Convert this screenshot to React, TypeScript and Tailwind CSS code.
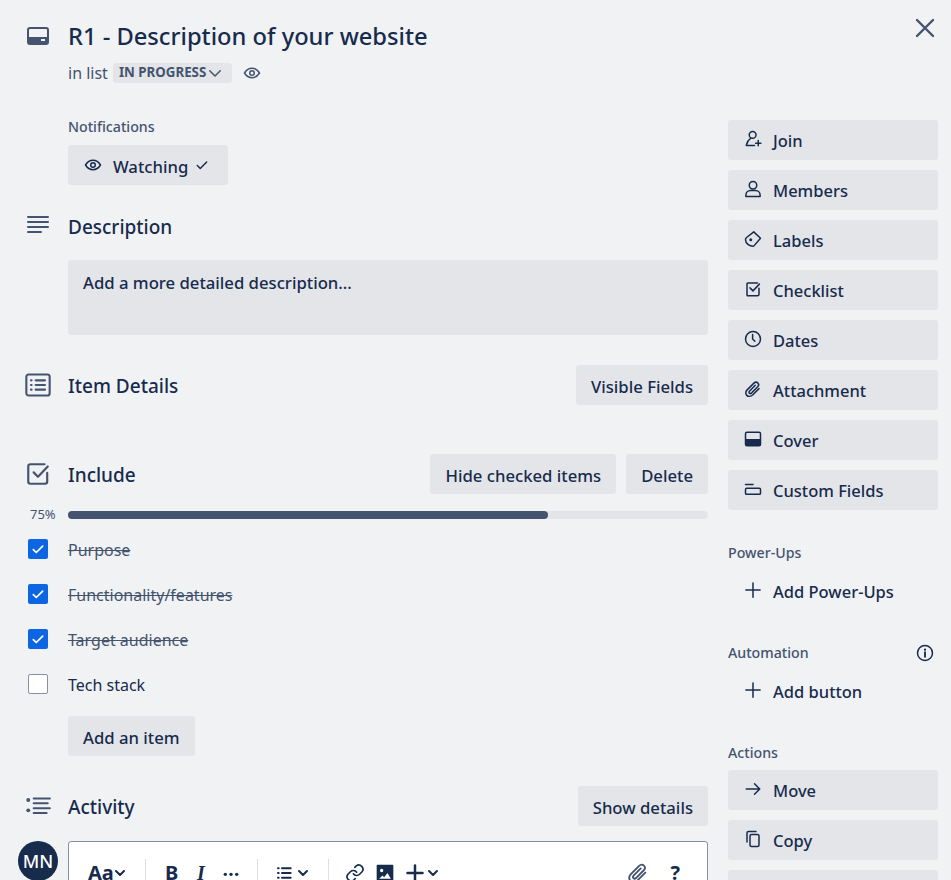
import type { ReactNode } from 'react';

const stroke = { fill: 'none', stroke: 'currentColor', strokeWidth: 2, strokeLinecap: 'round', strokeLinejoin: 'round' } as const;

function Icon({ size = 16, children, className = '' }: { size?: number; children: ReactNode; className?: string }) {
  return (
    <svg width={size} height={size} viewBox="0 0 24 24" className={`shrink-0 ${className}`}>
      {children}
    </svg>
  );
}

const EyeIcon = ({ size = 18 }: { size?: number }) => (
  <Icon size={size}>
    <path d="M2 12c2.600-4.200 6-6.300 10-6.300s7.400 2.100 10 6.300c-2.600 4.200-6 6.300-10 6.300S4.600 16.200 2 12Z" {...stroke} />
    <circle cx="12" cy="12" r="3" {...stroke} />
  </Icon>
);

const Chevron = ({ className = '' }: { className?: string }) => (
  <Icon size={16} className={className}><path d="M6 9l6 6 6-6" {...stroke} strokeWidth={3} /></Icon>
);

const sideIcons: Record<string, ReactNode> = {
  Join: (
    <>
      <circle cx="11.500" cy="6.500" r="4.500" {...stroke} />
      <path d="M9 11c-3 2-5 5-6 9.500h11M19 14v7M15.500 17.500h7" {...stroke} />
    </>
  ),
  Members: (
    <>
      <circle cx="12" cy="7" r="5" {...stroke} />
      <path d="M2.500 22v-1.500c0-4 3-6.500 6-6.500h7c3 0 6 2.500 6 6.500V22Z" {...stroke} />
    </>
  ),
  Labels: (
    <>
      <path d="M13 2.500 22 11l-9 10.500c-5 .5-11-3-11-8.500 0-1 .4-2 1-2.700Z" {...stroke} />
      <circle cx="9" cy="13" r="2" fill="currentColor" />
    </>
  ),
  Checklist: (
    <>
      <path d="M20 11v8a2 2 0 0 1-2 2H5a1 1 0 0 1-1-1V5a1 1 0 0 1 1-1h13" {...stroke} />
      <path d="M8 10.500l4 4 8.500-9" {...stroke} />
    </>
  ),
  Dates: (
    <>
      <circle cx="12" cy="12" r="10" {...stroke} />
      <path d="M11.500 6v6l3 3" {...stroke} />
    </>
  ),
  Attachment: <path d="M20 11.500 11.500 20c-2.500 2.300-6 2.300-7.800.5-1.800-1.800-1.800-5 .5-7.300l9-9c1.700-1.500 4-1.500 5.300-.2 1.300 1.300 1.300 3.500-.2 5l-8.500 8.500c-.9.800-2 .8-2.700.1-.7-.7-.7-1.900.1-2.700L15 7" {...stroke} />,
  Cover: (
    <>
      <rect x="2" y="3" width="20" height="18" rx="2" {...stroke} />
      <rect x="2" y="12" width="20" height="9" fill="currentColor" />
    </>
  ),
  'Custom Fields': (
    <>
      <path d="M2 6h10" {...stroke} />
      <rect x="2" y="11" width="20" height="8" rx="1.500" {...stroke} />
    </>
  ),
  Plus: <path d="M12 2.500v19M2.500 12h19" {...stroke} />,
  Move: <path d="M3 12h18M14 5l7 7-7 7" {...stroke} />,
  Copy: (
    <>
      <rect x="8" y="6" width="12" height="16" rx="2" {...stroke} />
      <path d="M4 16V4a2 2 0 0 1 2-2h10" {...stroke} />
    </>
  ),
};

function SideButton({ label, icon, plain = false }: { label: string; icon?: string; plain?: boolean }) {
  return (
    <div className={`flex h-10 items-center rounded-[3px] pl-[16px] text-[16.5px] font-medium ${plain ? '' : 'bg-[#e4e5e9]'}`}>
      <Icon size={18} className="-mt-[2px]">{sideIcons[icon ?? label]}</Icon>
      <span className="ml-[11px] pt-[2px]">{label}</span>
    </div>
  );
}

function GreyButton({ children }: { children: ReactNode }) {
  return <div className="flex h-10 items-center rounded-[3px] bg-[#e4e5e9] px-[15px] pt-[3px] text-[16.7px] font-medium">{children}</div>;
}

function SectionHead({ icon, title, children, className = '' }: { icon: ReactNode; title: string; children?: ReactNode; className?: string }) {
  return (
    <div className={`flex items-center ${className}`}>
      <div className="flex w-[68px] justify-center pl-[18px] pr-[10px] text-[#44546f]">{icon}</div>
      <h3 className="pt-[3px] text-[19px] font-medium">{title}</h3>
      {children && <div className="ml-auto flex gap-[10px]">{children}</div>}
    </div>
  );
}

function CheckRow({ label, done }: { label: string; done: boolean }) {
  return (
    <div className="flex h-[45px] items-center">
      <div className="flex w-[68px] justify-center pl-[18px] pr-[10px]">
        {done ? (
          <div className="flex h-5 w-5 items-center justify-center rounded-[2px] bg-[#0c66e4] text-white">
            <Icon size={14}><path d="M4 13l5 5L20 7" {...stroke} strokeWidth={3} /></Icon>
          </div>
        ) : (
          <div className="h-5 w-5 rounded-[2px] border border-[#8590a2] bg-white" />
        )}
      </div>
      <span className={`pt-[2px] text-[16px] ${done ? 'text-[#44546f] line-through' : ''}`}>{label}</span>
    </div>
  );
}

const Divider = ({ className = '' }: { className?: string }) => <div className={`h-7 w-px bg-[#dcdfe4] ${className}`} />;

export default function App() {
  return (
    <div
      className="relative h-[880px] w-[951px] overflow-hidden bg-[#f1f2f4] text-[#172b4d]"
      style={{ fontFamily: '"Noto Sans", sans-serif' }}
    >
      <svg width="24" height="24" viewBox="0 0 24 24" className="absolute right-[14px] top-4 text-[#44546f]">
        <path d="M4 4l16 16M20 4 4 20" {...stroke} strokeWidth={2.400} />
      </svg>

      <div className="flex">
        <main className="w-[708px]">
          {/* Title */}
          <div className="flex items-center pt-[18px]">
            <div className="flex w-[68px] justify-center pl-[18px] pr-[10px] text-[#44546f]">
              <Icon size={24}>
                <rect x="2" y="4" width="20" height="16" rx="2" {...stroke} />
                <rect x="2" y="13" width="20" height="7" fill="currentColor" />
                <rect x="15" y="15" width="4" height="2" fill="#f1f2f4" />
              </Icon>
            </div>
            <h1 className="text-[23.700px] font-medium leading-9">R1 - Description of your website</h1>
          </div>
          <div className="ml-[68px] mt-[9px] flex h-5 items-center text-[16px] text-[#44546f]">
            <span>in list</span>
            <span className="ml-[5px] flex h-5 items-center rounded-[3px] bg-[#e4e5e9] pl-[6px] pr-[8px] text-[13.300px] font-bold">
              IN PROGRESS
              <Icon size={18}><path d="M5 9l7 7 7-7" {...stroke} /></Icon>
            </span>
            <span className="ml-[11px]"><EyeIcon /></span>
          </div>

          {/* Notifications */}
          <div className="ml-[68px] mt-[34px]">
            <div className="text-[14.200px] font-medium leading-5 text-[#44546f]">Notifications</div>
            <div className="mt-2 inline-flex h-10 w-40 items-center rounded-[3px] bg-[#e4e5e9] pl-[16px] text-[16.7px] font-medium">
              <EyeIcon />
              <span className="ml-[11px] pt-[3px]">Watching</span>
              <Icon size={14} className="ml-[7px]"><path d="M4 13l5 5L20 7" {...stroke} strokeWidth={2.500} /></Icon>
            </div>
          </div>

          {/* Description */}
          <SectionHead
            className="mt-[26px] h-[30px]"
            title="Description"
            icon={
              <Icon size={24}>
                <path d="M2 3h20M2 8h20M2 13h20M2 18h13" {...stroke} />
              </Icon>
            }
          />
          <div className="ml-[68px] mt-[19px] h-[75px] rounded-[3px] bg-[#e4e5e9] px-[15px] pt-[11px] text-[16.7px] font-medium leading-6">
            Add a more detailed description…
          </div>

          {/* Item Details */}
          <SectionHead
            className="mt-[30px] h-10"
            title="Item Details"
            icon={
              <Icon size={28}>
                <rect x="2" y="3" width="20" height="18" rx="2" {...stroke} strokeWidth={1.800} />
                <path d="M10 8h8M10 12h8M10 16h8M6 8h.5M6 12h.5M6 16h.5" {...stroke} strokeWidth={1.800} />
              </Icon>
            }
          >
            <GreyButton>Visible Fields</GreyButton>
          </SectionHead>

          {/* Checklist */}
          <SectionHead
            className="mt-[49px] h-10"
            title="Include"
            icon={
              <Icon size={26}>
                <path d="M20.500 11v8a2 2 0 0 1-2 2H5a2 2 0 0 1-2-2V5a2 2 0 0 1 2-2h13" {...stroke} />
                <path d="M8 10.500l4 4 9-9.500" {...stroke} />
              </Icon>
            }
          >
            <GreyButton>Hide checked items</GreyButton>
            <GreyButton>Delete</GreyButton>
          </SectionHead>
          <div className="mt-[11px] flex h-[20px] items-center">
            <span className="w-[68px] pl-[30px] text-[13px] text-[#44546f]">75%</span>
            <div className="h-2 flex-1 rounded-full bg-[#e4e5e9]">
              <div className="h-2 w-3/4 rounded-full bg-[#44546f]" />
            </div>
          </div>
          <div className="mt-[1px]">
            <CheckRow label="Purpose" done />
            <CheckRow label="Functionality/features" done />
            <CheckRow label="Target audience" done />
            <CheckRow label="Tech stack" done={false} />
          </div>
          <div className="ml-[68px] mt-[10px] inline-flex">
            <GreyButton>Add an item</GreyButton>
          </div>

          {/* Activity */}
          <SectionHead
            className="mt-[30px] h-10"
            title="Activity"
            icon={
              <Icon size={26}>
                <path d="M8 5h15M8 9.500h13M8 14h15M8 18.500h12" {...stroke} strokeWidth={1.800} />
                <circle cx="3" cy="6.500" r="1.800" fill="currentColor" />
                <circle cx="3" cy="16" r="1.800" fill="currentColor" />
              </Icon>
            }
          >
            <GreyButton>Show details</GreyButton>
          </SectionHead>
          <div className="mt-[15px] flex">
            <div className="flex w-[68px] pl-[18px]">
              <div className="flex h-10 w-10 items-center justify-center rounded-full bg-[#172b4d] text-[18px] font-medium text-white">MN</div>
            </div>
            <div className="flex h-[60px] flex-1 items-start rounded-[3px] border border-[#8590a2] bg-white pl-[19px] pr-[27px] pt-[17px]">
              <div className="flex h-7 flex-1 items-center">
                <span className="w-6 text-[20px] font-bold">Aa</span>
                <Chevron />
                <Divider className="ml-[17px]" />
                <span className="ml-[19px] w-[13px] text-[20px] font-bold">B</span>
                <span className="ml-[19px] w-[9px] font-['Liberation_Serif'] text-[20px] font-bold italic">I</span>
                <Icon size={16} className="ml-[17px]">
                  <circle cx="3.500" cy="14" r="2.500" fill="currentColor" />
                  <circle cx="12" cy="14" r="2.500" fill="currentColor" />
                  <circle cx="20.500" cy="14" r="2.500" fill="currentColor" />
                </Icon>
                <Divider className="ml-[18px]" />
                <Icon size={16} className="ml-[18px]"><path d="M9 5h13M9 12h13M9 19h13M3 5h1M3 12h1M3 19h1" {...stroke} strokeWidth={3} /></Icon>
                <Chevron className="ml-[3px]" />
                <Divider className="ml-[17px]" />
                <Icon size={20} className="ml-[16px]">
                  <path d="M10 13a5 5 0 0 0 7.500.5l3-3a5 5 0 0 0-7-7l-1.700 1.700" {...stroke} />
                  <path d="M14 11a5 5 0 0 0-7.500-.5l-3 3a5 5 0 0 0 7 7l1.700-1.700" {...stroke} />
                </Icon>
                <Icon size={20} className="ml-[10px]">
                  <path d="M3 2h18a1 1 0 0 1 1 1v18a1 1 0 0 1-1 1H3a1 1 0 0 1-1-1V3a1 1 0 0 1 1-1Zm5 5a2 2 0 1 0 0 4 2 2 0 0 0 0-4Zm-3 12h14l-4-7-4 5-2-2Z" fill="currentColor" fillRule="evenodd" />
                </Icon>
                <Icon size={20} className="ml-[10px]"><path d="M12 3v18M3 12h18" {...stroke} strokeWidth={3} /></Icon>
                <Chevron />
              </div>
              <div className="flex h-7 items-center gap-[21px]">
                <Icon size={22} className="text-[#44546f]">{sideIcons.Attachment}</Icon>
                <span className="text-[20px] font-bold leading-none">?</span>
              </div>
            </div>
          </div>
        </main>

        <aside className="ml-5 w-[210px] pt-[120px]">
          <div className="flex flex-col gap-[10px]">
            {['Join', 'Members', 'Labels', 'Checklist', 'Dates', 'Attachment', 'Cover', 'Custom Fields'].map((label) => (
              <SideButton key={label} label={label} />
            ))}
          </div>
          <div className="mt-[33px] text-[14.200px] font-medium leading-5 text-[#44546f]">Power-Ups</div>
          <div className="mt-[8px]"><SideButton label="Add Power-Ups" icon="Plus" plain /></div>

          <div className="mt-[32px] flex items-center justify-between text-[14.200px] font-medium leading-5 text-[#44546f]">
            Automation
            <svg width="18" height="18" viewBox="0 0 24 24" className="mr-[4px] text-[#172b4d]">
              <circle cx="12" cy="12" r="10" {...stroke} />
              <path d="M12 11v6" {...stroke} strokeWidth={2.500} />
              <circle cx="12" cy="7.500" r="1.500" fill="currentColor" />
            </svg>
          </div>
          <div className="mt-[8px]"><SideButton label="Add button" icon="Plus" plain /></div>

          <div className="mt-[32px] text-[14.200px] font-medium leading-5 text-[#44546f]">Actions</div>
          <div className="mt-[7px] flex flex-col gap-[10px]">
            <SideButton label="Move" />
            <SideButton label="Copy" />
            <div className="h-10 rounded-[3px] bg-[#e4e5e9]" />
          </div>
        </aside>
      </div>
    </div>
  );
}
